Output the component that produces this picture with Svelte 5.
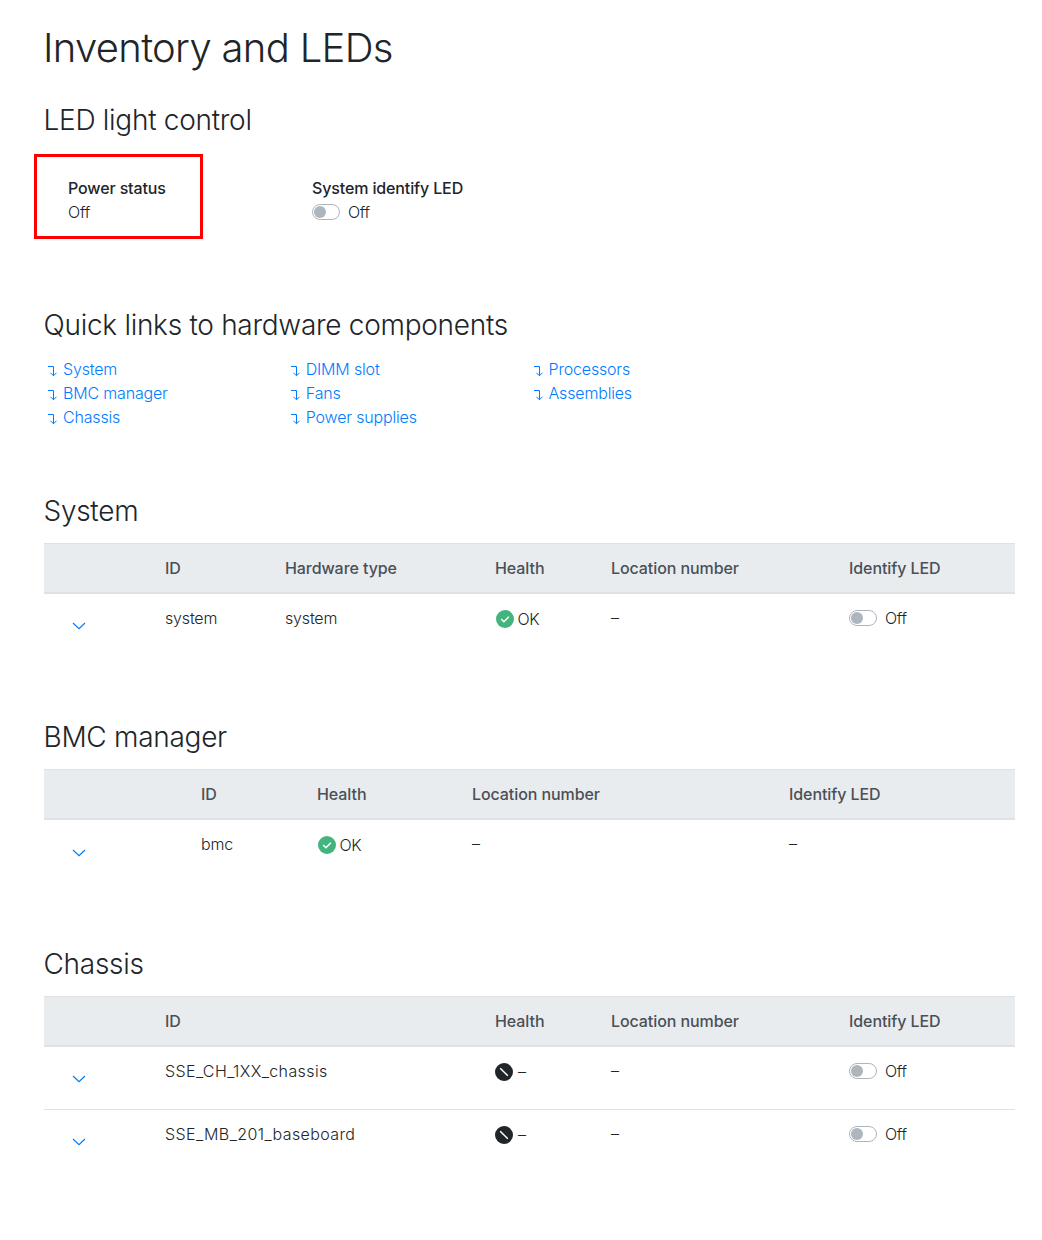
<script>
	const links = [
		['System', 'BMC manager', 'Chassis'],
		['DIMM slot', 'Fans', 'Power supplies'],
		['Processors', 'Assemblies'],
	]

	const labels = {
		id: 'ID',
		type: 'Hardware type',
		health: 'Health',
		location: 'Location number',
		led: 'Identify LED',
	}

	const tables = [
		{
			title: 'System',
			columns: ['id', 'type', 'health', 'location', 'led'],
			widths: [105, 120, 210, 116, 238, 182],
			rows: [{ id: 'system', type: 'system', health: 'OK', location: '–', led: 'Off' }],
		},
		{
			title: 'BMC manager',
			columns: ['id', 'health', 'location', 'led'],
			widths: [141, 116, 155, 317, 242],
			rows: [{ id: 'bmc', health: 'OK', location: '–', led: '–' }],
		},
		{
			title: 'Chassis',
			columns: ['id', 'health', 'location', 'led'],
			widths: [105, 330, 116, 238, 182],
			rows: [
				{ id: 'SSE_CH_1XX_chassis', health: '–', location: '–', led: 'Off' },
				{ id: 'SSE_MB_201_baseboard', health: '–', location: '–', led: 'Off' },
			],
		},
	]
</script>

{#snippet toggle()}
	<span class="switch"><span class="track"></span>Off</span>
{/snippet}

<main>
	<h1>Inventory and LEDs</h1>

	<section class="control">
		<h2>LED light control</h2>
		<dl>
			<div class="power">
				<dt>Power status</dt>
				<dd>Off</dd>
			</div>
			<div>
				<dt>System identify LED</dt>
				<dd>{@render toggle()}</dd>
			</div>
		</dl>
	</section>

	<section class="quick">
		<h2>Quick links to hardware components</h2>
		<div class="links">
			{#each links as group}
				<div>
					{#each group as link}
						<a href="#{link}">
							<svg width="16" height="16" viewBox="0 0 16 16">
								<path d="M4 3.5h5.5v9M6.5 9.8l3 3 3-3" />
							</svg>
							{link}
						</a>
					{/each}
				</div>
			{/each}
		</div>
	</section>

	{#each tables as table}
		<section>
			<h2>{table.title}</h2>
			<table>
				<colgroup>
					{#each table.widths as width}
						<col style="width: {width}px" />
					{/each}
				</colgroup>
				<thead>
					<tr>
						<th></th>
						{#each table.columns as column}
							<th>{labels[column]}</th>
						{/each}
					</tr>
				</thead>
				<tbody>
					{#each table.rows as row}
						<tr>
							<td>
								<svg class="chevron" width="14" height="8" viewBox="0 0 14 8">
									<path d="M1 1l6 5.7L13 1" />
								</svg>
							</td>
							{#each table.columns as column}
								<td class:part={row[column].includes('_')}>
									{#if column === 'health'}
										<span class="health" class:ok={row.health === 'OK'}>
											<svg width="20" height="20" viewBox="0 0 20 20">
												<circle cx="10" cy="10" r="9" />
												{#if row.health === 'OK'}
													<path d="M6.2 10l2.7 2.7 5-5" />
												{:else}
													<path d="M6.2 6.2l7.6 7.6" />
												{/if}
											</svg>
											<span>{row.health}</span>
										</span>
									{:else if row[column] === 'Off'}
										{@render toggle()}
									{:else}
										<span class:dash={row[column] === '–'}>{row[column]}</span>
									{/if}
								</td>
							{/each}
						</tr>
					{/each}
				</tbody>
			</table>
		</section>
	{/each}
</main>

<style>
	:global(body) {
		background: #fff;
	}

	main {
		box-sizing: border-box;
		width: 1042px;
		height: 1240px;
		padding: 24px 27px 0 44px;
		overflow: hidden;
		color: #212529;
		font: 320 16px/24px Inter, sans-serif;
		letter-spacing: -0.17px;
	}

	h1,
	h2,
	dl,
	dd {
		margin: 0;
	}

	h1 {
		margin-left: -1px;
		font-size: 40px;
		font-weight: 350;
		line-height: 48px;
		letter-spacing: -0.68px;
	}

	h2 {
		margin: 0 0 14.2px -0.5px;
		padding-top: 1.8px;
		font-size: 28px;
		font-weight: 350;
		line-height: 33.6px;
		letter-spacing: -0.28px;
	}

	section {
		margin-top: 64px;
	}

	.control {
		margin-top: 30px;
	}

	dl {
		display: grid;
		grid-template-columns: 244px 244px;
		padding: 24.4px 24px 0;
	}

	dt {
		font-weight: 550;
		letter-spacing: -0.13px;
	}

	.power {
		position: relative;
	}

	.power::after {
		content: '';
		position: absolute;
		top: -22px;
		left: -34px;
		box-sizing: border-box;
		width: 168.5px;
		height: 85px;
		border: 3px solid #f00;
	}

	.quick {
		margin-top: 83.4px;
	}

	.links {
		display: grid;
		grid-template-columns: repeat(3, 242.75px);
	}

	a {
		display: flex;
		align-items: center;
		gap: 3px;
		height: 24px;
		color: #007bff;
		text-decoration: none;
	}

	svg {
		flex: none;
		fill: none;
	}

	a svg {
		position: relative;
		top: 2px;
		stroke: #007bff;
	}

	table {
		width: 971px;
		table-layout: fixed;
		border-spacing: 0;
	}

	th {
		height: 48px;
		padding: 0 16px;
		border-top: 1px solid #dee2e6;
		border-bottom: 2px solid #dee2e6;
		background: #e9ecef;
		color: #495057;
		font-weight: 500;
		letter-spacing: -0.08px;
		text-align: left;
	}

	td {
		box-sizing: border-box;
		height: 62px;
		padding: 12px 16px 0;
		vertical-align: top;
	}

	.part {
		letter-spacing: 0.4px;
	}

	tr + tr td {
		border-top: 1px solid #dee2e6;
	}

	.chevron {
		display: block;
		margin: 16.8px 0 0 12px;
		stroke: #007bff;
		stroke-width: 1.2;
	}

	.switch {
		display: flex;
		align-items: center;
		gap: 8px;
		letter-spacing: -0.3px;
	}

	.track {
		box-sizing: border-box;
		width: 28px;
		height: 16px;
		padding: 1px;
		border: 1px solid #adb5bd;
		border-radius: 8px;
	}

	.track::before {
		content: '';
		display: block;
		width: 12px;
		height: 12px;
		border-radius: 50%;
		background: #adb5bd;
	}

	.dash {
		position: relative;
		top: -1px;
	}

	.health {
		display: flex;
		align-items: center;
		gap: 4px;
		height: 27px;
	}

	.health span {
		position: relative;
		top: -1px;
	}

	.health svg {
		margin-left: -1px;
		stroke: #fff;
		stroke-width: 1.5;
	}

	.health circle {
		fill: #212529;
		stroke: none;
	}

	.ok svg {
		margin-left: 0;
	}

	.ok {
		gap: 2.5px;
		height: 26px;
		letter-spacing: -0.5px;
	}

	.ok span {
		top: 0;
	}

	.ok circle {
		fill: #44b47e;
	}
</style>
